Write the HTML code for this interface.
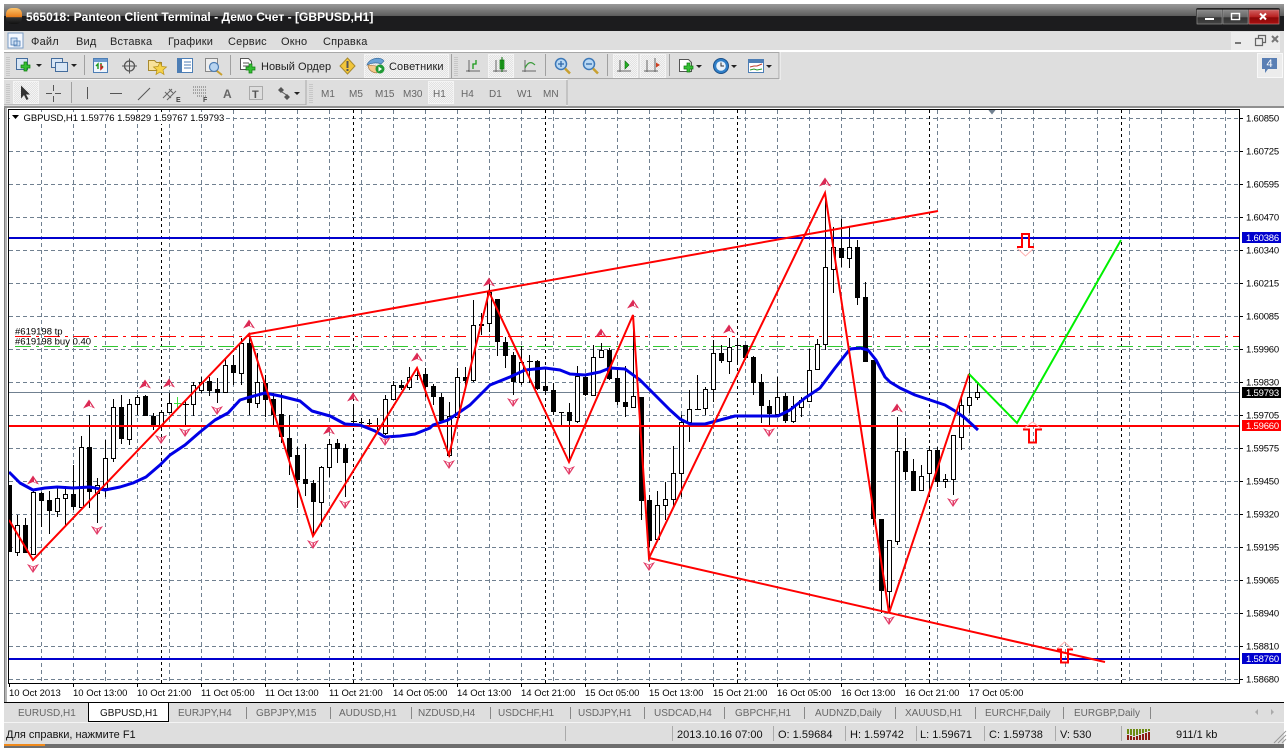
<!DOCTYPE html>
<html><head><meta charset="utf-8"><title>Panteon Client Terminal</title>
<style>
html,body{margin:0;padding:0;background:#fff;width:1288px;height:748px;overflow:hidden}
svg{display:block;position:absolute;left:0;top:0}
text{font-family:"Liberation Sans","Noto Sans CJK JP",sans-serif;font-size:11px;fill:#222}
.t{font-size:12px;font-weight:bold;fill:#fff;letter-spacing:.03px}
.m{font-size:11px;fill:#222;letter-spacing:.2px}
.g{font-size:10px;fill:#666}
.c{font-size:9.5px;fill:#000}
.p{font-size:9.5px;fill:#000;letter-spacing:-.2px}
.pw{font-size:9.5px;fill:#fff;letter-spacing:-.2px}
.tab{font-size:10px;fill:#666}
.s{font-size:11px;fill:#111}
</style></head><body>
<svg width="1288" height="748" viewBox="0 0 1288 748" xmlns="http://www.w3.org/2000/svg">
<defs>
<linearGradient id="tg" x1="0" y1="0" x2="0" y2="1"><stop offset="0" stop-color="#9a9a9a"/><stop offset="1" stop-color="#5c5c5c"/></linearGradient>
<linearGradient id="orb" x1="0" y1="0" x2="0" y2="1"><stop offset="0" stop-color="#fbc36a"/><stop offset=".55" stop-color="#e87e1c"/><stop offset=".6" stop-color="#333"/><stop offset="1" stop-color="#111"/></linearGradient>
<linearGradient id="wb" x1="0" y1="0" x2="0" y2="1"><stop offset="0" stop-color="#8a8a8a"/><stop offset=".5" stop-color="#666"/><stop offset=".55" stop-color="#333"/><stop offset="1" stop-color="#444"/></linearGradient>
<linearGradient id="wr" x1="0" y1="0" x2="0" y2="1"><stop offset="0" stop-color="#d06060"/><stop offset=".5" stop-color="#b82020"/><stop offset=".55" stop-color="#8c0808"/><stop offset="1" stop-color="#a81010"/></linearGradient>
<pattern id="pr" width="2" height="2" patternUnits="userSpaceOnUse"><rect width="2" height="2" fill="#e2e2e2"/><rect width="1" height="1" fill="#f4f4f4"/><rect x="1" y="1" width="1" height="1" fill="#f4f4f4"/></pattern>
<g id="ua" transform="translate(0,.5)"><path d="M0 9L6 0L12 9L6 6.500Z" fill="#dc2a55"/><path d="M7 3.500L9.500 7.600L7 6.300Z" fill="#fff"/></g>
<g id="da" transform="translate(0,1)"><path d="M0 0L6 2.500L12 0L6 9Z" fill="#e23a66"/><path d="M2.800 1.600L5.500 6.500L5.500 3.300Z" fill="#fff"/><path d="M9.200 1.600L7 5.500L7 3.300Z" fill="#fff"/></g>
</defs>

<!-- title bar -->
<rect x="4" y="4" width="1280" height="12" fill="url(#tg)"/>
<rect x="4" y="16" width="1280" height="15" fill="#1c1c1e"/>
<rect x="6" y="8" width="16" height="16" rx="6" fill="url(#orb)"/>
<text class="t" x="26" y="21">565018: Panteon Client Terminal - Демо Счет - [GBPUSD,H1]</text>
<rect x="1196" y="8" width="84" height="17" rx="2" fill="#222"/>
<rect x="1197" y="10" width="25" height="14" fill="url(#wb)" stroke="#999" stroke-width=".6"/>
<rect x="1223" y="10" width="25" height="14" fill="url(#wb)" stroke="#999" stroke-width=".6"/>
<rect x="1249" y="10" width="30" height="14" fill="url(#wr)" stroke="#c88" stroke-width=".6"/>
<rect x="1205" y="18" width="9" height="2" fill="#fff"/>
<rect x="1231.5" y="13.5" width="8" height="6" fill="none" stroke="#fff" stroke-width="1.4"/>
<path d="M1260 13.5l6 6M1266 13.5l-6 6" stroke="#fff" stroke-width="2"/>

<!-- menu -->
<rect x="4" y="31" width="1280" height="19" fill="#dedede"/>
<rect x="8" y="33" width="15" height="15" fill="#f4f8ff" stroke="#7a9cc4"/>
<path d="M11 38h6v7h-6zM14 41h6v5h-6z" fill="#cfe0f4" stroke="#4a78b0" stroke-width=".8"/>
<text class="m" x="31" y="45">Файл</text><text class="m" x="76" y="45">Вид</text><text class="m" x="110" y="45">Вставка</text><text class="m" x="168" y="45">Графики</text><text class="m" x="228" y="45">Сервис</text><text class="m" x="281" y="45">Окно</text><text class="m" x="323" y="45">Справка</text>
<rect x="1231" y="32" width="49" height="18" fill="#ececec"/>
<rect x="1235" y="42" width="6" height="2" fill="#777"/>
<path d="M1255.5 38.5h7v7h-7zM1258.5 38.5v-3h7v7h-3" fill="none" stroke="#666" stroke-width="1.2"/>
<path d="M1272 36l6 6M1278 36l-6 6" stroke="#777" stroke-width="2"/>

<!-- toolbars -->
<rect x="4" y="50" width="1280" height="56" fill="#dedede"/>
<rect x="4" y="50" width="1276" height="2" fill="#fff"/>
<path d="M4 52.5H779V79" fill="none" stroke="#a8a8a8"/>
<path d="M4 78.5H779" stroke="#a8a8a8"/>
<path d="M780 52V80" stroke="#f8f8f8"/>
<path d="M4 79.5H567V106" fill="none" stroke="#f8f8f8"/>
<path d="M4 104.5H306" stroke="#bbb"/>
<path d="M306 80V105M567 80V105" stroke="#a8a8a8"/>
<rect x="4" y="106" width="1280" height="2" fill="#8f8f8f"/>
<path d="M7 57V76M9 57V76M7 84V103M9 84V103M310 84V103M312 84V103M455 57V76M457 57V76" stroke="#b0b0b0" stroke-dasharray="1 1"/>

<!-- toolbar 1 icons -->
<rect x="16.500" y="58.500" width="11" height="11" fill="#d8e6f5" stroke="#446c9c"/>
<path d="M24 62h3v3h3v3h-3v3h-3v-3h-3v-3h3z" fill="#35c035" stroke="#0c7c0c" stroke-width=".7"/>
<path d="M36 64h6l-3 3z" fill="#222"/>
<rect x="51.500" y="58.500" width="11" height="9" fill="#d8e6f5" stroke="#446c9c"/><rect x="55.500" y="62.500" width="12" height="9" fill="#d8e6f5" stroke="#446c9c"/>
<path d="M71 64h6l-3 3z" fill="#222"/><path d="M84.500 55V75" stroke="#a0a0a0"/>
<rect x="93.500" y="58.500" width="14" height="14" fill="#eef5fc" stroke="#4d7eb5"/><rect x="94" y="59" width="13" height="3" fill="#6b9ad0"/><path d="M98 69v-5l-2 2M101 63v5l2-2" fill="none" stroke="#1a9a1a" stroke-width="1.4"/><path d="M101 64v5l2-2" fill="none" stroke="#d02020" stroke-width="1.4"/>
<circle cx="129.500" cy="66" r="5" fill="none" stroke="#555" stroke-width="1.3"/><path d="M129.500 58.500v15M122 66h15" stroke="#555"/>
<path d="M148.500 60.500h6l2 2h5v8h-13z" fill="#f8e29a" stroke="#a88a2e"/><path d="M160 62l2 4.500 4.500.5-3.500 3 1 4.500-4-2.500-4 2.500 1-4.500-3.500-3 4.500-.5z" fill="#f6d34a" stroke="#b58f16" stroke-width=".7"/>
<rect x="177.500" y="58.500" width="15" height="14" fill="#fff" stroke="#4d7eb5"/><rect x="178" y="59" width="4" height="13" fill="#4d7eb5"/><path d="M184 62h7M184 65h7M184 68h7" stroke="#4d7eb5"/>
<rect x="205.500" y="58.500" width="12" height="13" fill="#eee" stroke="#888"/><circle cx="214" cy="67" r="4.500" fill="#b8d4f0" stroke="#4d7eb5" stroke-width="1.2"/><path d="M217 71l5 4" stroke="#c8a030" stroke-width="2"/>
<path d="M230.500 55V75" stroke="#a0a0a0"/>
<path d="M240.500 58.500h8l3 3v8h-11z" fill="#fff" stroke="#555"/><path d="M243 63h6M243 66h6" stroke="#555"/>
<path d="M249 64h3v3h3v3h-3v3h-3v-3h-3v-3h3z" fill="#35c035" stroke="#0c7c0c" stroke-width=".7"/>
<text class="m" x="261" y="70" style="letter-spacing:0">Новый Ордер</text>
<path d="M347.500 58L355 66L347.500 74L340 66Z" fill="#f2c63a" stroke="#a88a2e"/><rect x="346.500" y="61" width="2" height="7" fill="#555"/><rect x="346.500" y="69" width="2" height="2" fill="#555"/>
<rect x="364.500" y="54.500" width="84" height="23" fill="url(#pr)" stroke="#f4f4f4"/>
<path d="M367 65c2-7 14-9 17-4l-3 3c-4-2-10-1-14 1z" fill="#6aa2d6" stroke="#3d6fa0" stroke-width=".7"/>
<path d="M368 65c0 5 5 8 9 8l-1-7z" fill="#f6c88a" stroke="#a07038" stroke-width=".6"/><circle cx="380" cy="69" r="4.500" fill="#1f9a35"/><path d="M378.500 66.500v5l3.500-2.500z" fill="#fff"/>
<text class="m" x="389" y="70" style="letter-spacing:.1px">Советники</text>
<path d="M451.500 54V78" stroke="#a0a0a0"/>
<path d="M469 60v12M466 71h14M468 71l1-1" stroke="#666" fill="none"/><path d="M473 69v-5h3v-4" stroke="#1a9a1a" fill="none" stroke-width="1.3"/>
<rect x="488.500" y="54.500" width="25" height="23" fill="url(#pr)" stroke="#f4f4f4"/>
<path d="M496 60v12M493 71h14" stroke="#666" fill="none"/><rect x="500" y="60" width="4" height="9" fill="#22b022" stroke="#0c6c0c" stroke-width=".7"/><path d="M502 57v15" stroke="#0c6c0c"/>
<path d="M525 60v12M522 71h14" stroke="#666" fill="none"/><path d="M525 68c3-6 6-7 10-3" stroke="#3b9b3b" fill="none" stroke-width="1.2"/>
<path d="M545.500 54V76" stroke="#a0a0a0"/>
<circle cx="561" cy="64" r="5.500" fill="#b8d8f4" stroke="#3d78b8" stroke-width="1.5"/><path d="M558 64h6M561 61v6" stroke="#2f68a8" stroke-width="1.3"/><path d="M565 68.500l5 5" stroke="#c8a030" stroke-width="2.500"/>
<circle cx="589" cy="64" r="5.500" fill="#b8d8f4" stroke="#3d78b8" stroke-width="1.5"/><path d="M586 64h6" stroke="#2f68a8" stroke-width="1.3"/><path d="M593 68.500l5 5" stroke="#c8a030" stroke-width="2.500"/>
<path d="M607.500 54V76" stroke="#a0a0a0"/>
<rect x="613.500" y="54.500" width="24" height="23" fill="url(#pr)" stroke="#f4f4f4"/><path d="M620 60v12M617 71h14" stroke="#666" fill="none"/><path d="M625 61v8l4-4z" fill="#22b022" stroke="#0c6c0c" stroke-width=".6"/>
<rect x="640.500" y="54.500" width="25" height="23" fill="url(#pr)" stroke="#f4f4f4"/><path d="M647 60v12M644 71h14M655 58v14" stroke="#666" fill="none"/><path d="M660 65l-4-2.500v5z" fill="#d04020"/>
<path d="M669.500 54V76" stroke="#a0a0a0"/>
<path d="M679.500 59.500h9l3 3v9h-12z" fill="#fff" stroke="#555"/><path d="M687 63h3v3h3v3h-3v3h-3v-3h-3v-3h3z" fill="#35c035" stroke="#0c7c0c" stroke-width=".7"/><path d="M696 65h6l-3 3z" fill="#222"/>
<circle cx="721" cy="66" r="7.500" fill="#2f7fc8" stroke="#1b4f88"/><circle cx="721" cy="66" r="4.800" fill="#e8f2fb"/><path d="M721 62.500V66h3" stroke="#333" fill="none"/><path d="M731 65h6l-3 3z" fill="#222"/>
<rect x="748.500" y="59.500" width="15" height="13" fill="#fff" stroke="#4d7eb5"/><rect x="749" y="60" width="14" height="3" fill="#4d7eb5"/><path d="M750 67l4-1 3 0 5-2" stroke="#c04030" fill="none"/><path d="M750 70l4-1 3 1 5-1" stroke="#2a9a2a" fill="none"/><path d="M766 65h6l-3 3z" fill="#222"/>
<rect x="1257.500" y="53.500" width="25" height="24" fill="#ececec" stroke="#f8f8f8"/>
<path d="M1262 58h15v11h-9l-3 4v-4h-3z" fill="#5a7fb4"/><text x="1266.500" y="67" style="font-size:11px;fill:#fff">4</text>

<!-- toolbar 2 icons -->
<rect x="13.500" y="81.500" width="25" height="22" fill="url(#pr)" stroke="#f4f4f4"/>
<path d="M21 85.500v13l3-3.500 2.500 5 2-1-2.500-4.500 4 0z" fill="#333"/>
<path d="M53.500 85v6M53.500 96v6M46 93.500h6M55 93.500h6" stroke="#555"/>
<path d="M71.500 82V103" stroke="#a0a0a0"/>
<path d="M87.500 87V99" stroke="#555" stroke-width="1"/><path d="M110 93.500h12" stroke="#555"/><path d="M138 100l12-12" stroke="#555"/>
<path d="M163 98l9-9M167 100l9-9M165 92l6 6M169 89l4 4" stroke="#666" fill="none"/><text x="176" y="102" style="font-size:7px;fill:#444;font-weight:bold">E</text>
<path d="M193 87h14M193 90h14M193 93h14M197 96h10" stroke="#666" stroke-dasharray="1 1"/><text x="203" y="102" style="font-size:7px;fill:#444;font-weight:bold">F</text>
<text x="223" y="98" style="font-size:12px;font-weight:bold;fill:#666">A</text>
<rect x="249.500" y="86.500" width="13" height="13" fill="none" stroke="#777" stroke-dasharray="1 1"/><text x="252" y="98" style="font-size:11px;font-weight:bold;fill:#555">T</text>
<path d="M281 87l3 3-3 3-3-3zM287 94l3 3-3 3-3-3z" fill="#555"/><path d="M282 92l6 4" stroke="#555"/><path d="M294 92h6l-3 3z" fill="#222"/>
<text class="g" x="321" y="97">M1</text><text class="g" x="349" y="97">M5</text><text class="g" x="375" y="97">M15</text><text class="g" x="403" y="97">M30</text>
<rect x="428.500" y="81.500" width="25" height="22" fill="url(#pr)" stroke="#f4f4f4"/>
<text class="g" x="433" y="97">H1</text><text class="g" x="461" y="97">H4</text><text class="g" x="489" y="97">D1</text><text class="g" x="517" y="97">W1</text><text class="g" x="543" y="97">MN</text>

<!-- left border -->
<rect x="4" y="108" width="1" height="594" fill="#7d7d7d"/><rect x="5" y="108" width="2" height="594" fill="#b4b4b4"/>

<!-- chart -->
<g fill="none" stroke="#708090" stroke-dasharray="4 3">
<path d="M9 118.500H1239M9 151.500H1239M9 184.500H1239M9 217.500H1239M9 250.500H1239M9 283.500H1239M9 316.500H1239M9 349.500H1239M9 382.500H1239M9 415.500H1239M9 448.500H1239M9 481.500H1239M9 514.500H1239M9 547.500H1239M9 580.500H1239M9 613.500H1239M9 646.500H1239M9 679.500H1239"/>
<path d="M41.500 110V683M73.500 110V683M105.500 110V683M137.500 110V683M169.500 110V683M201.500 110V683M233.500 110V683M265.500 110V683M297.500 110V683M329.500 110V683M361.500 110V683M393.500 110V683M425.500 110V683M457.500 110V683M489.500 110V683M521.500 110V683M553.500 110V683M585.500 110V683M617.500 110V683M649.500 110V683M681.500 110V683M713.500 110V683M745.500 110V683M777.500 110V683M809.500 110V683M841.500 110V683M873.500 110V683M905.500 110V683M937.500 110V683M969.500 110V683M1001.500 110V683M1033.500 110V683M1065.500 110V683M1097.500 110V683M1129.500 110V683M1161.500 110V683M1193.500 110V683M1225.500 110V683"/>
</g>
<path d="M161.500 110V683M353.500 110V683M545.500 110V683M737.500 110V683M929.500 110V683M1121.500 110V683" stroke="#000" stroke-dasharray="3 3" fill="none"/>
<rect x="10" y="112" width="215" height="12" fill="#fff"/>
<!-- price lines -->
<path d="M9 392.500H1239" stroke="#708090"/>
<path d="M15 336.500H1239" stroke="#f00" stroke-dasharray="16 5 3 5" fill="none"/>
<path d="M15 346.500H1239" stroke="#2ec82e" stroke-dasharray="16 5 3 5" fill="none"/>

<!-- wicks -->
<path stroke="#000" fill="none" d="M17.500 515V556M25.500 518V553M33.500 490V555M41.500 492V527M49.500 491V534M57.500 488V517M65.500 486V527M73.500 465V510M81.500 436V508M89.500 415V508M97.500 478V523M105.500 440V497M113.500 399V462M121.500 395V444M129.500 399V445M137.500 395V415M145.500 395V416M153.500 413V430M161.500 410V430M169.500 393V413M185.500 400V425M193.500 382V416M201.500 377V393M209.500 377V396M217.500 378V403M225.500 358V392M233.500 355V385M241.500 338V385M249.500 333V415M257.500 353V408M265.500 375V417M273.500 393V427M281.500 393V443M289.500 415V475M297.500 447V508M305.500 444V496M313.500 480V535M321.500 466V527M329.500 439V477M337.500 439V463M345.500 444V497M353.500 407V425M361.500 418V425M369.500 419V426M377.500 418V430M385.500 395V435M393.500 381V400M401.500 380V390M409.500 367V390M417.500 368V380M425.500 368V397M433.500 384V405M441.500 393V423M449.500 402V457M457.500 368V417M465.500 367V387M473.500 300V382M481.500 313V335M489.500 280V332M497.500 299V356M505.500 337V368M513.500 352V395M521.500 346V385M529.500 355V383M537.500 360V390M545.500 370V395M553.500 383V415M561.500 412V425M569.500 403V462M577.500 366V423M585.500 375V396M593.500 345V396M601.500 343V358M609.500 348V380M617.500 367V405M625.500 366V417M633.500 330V408M641.500 397V520M649.500 495V547M657.500 491V540M665.500 482V520M673.500 446V507M681.500 415V497M689.500 390V442M697.500 375V410M705.500 387V415M713.500 340V402M721.500 345V363M729.500 338V374M737.500 338V365M745.500 345V360M753.500 356V395M761.500 374V423M769.500 400V425M777.500 377V414M785.500 393V423M793.500 396V423M801.500 397V417M809.500 349V402M817.500 339V370M825.500 193V350M833.500 227V293M841.500 219V267M849.500 227V268M857.500 240V305M865.500 282V362M873.500 360V525M881.500 519V613M889.500 540V613M897.500 417V545M905.500 438V480M913.500 459V491M921.500 465V491M929.500 447V490M937.500 447V487M945.500 474V488M953.500 435V495M961.500 397V450M969.500 373V413M977.500 383V400"/>
<!-- dojis -->
<path stroke="#000" fill="none" d="M183 404.500h6M351 421.500h6M359 422.500h5M367 423.500h5M375 426.500h5M415 375.500h6M527 361.500h6M559 412.500h5M695 409.500h6M735 345.500h6"/>
<path stroke="#3cdc3c" fill="none" d="M177.500 397V408M174 403.500h7"/>
<!-- white bodies -->
<path fill="#fff" stroke="#000" d="M15.500 525.500h4v27h-4zM31.500 492.500h4v62h-4zM55.500 498.500h4v13h-4zM63.500 494.500h4v4h-4zM79.500 447.500h4v60h-4zM95.500 485.500h4v8h-4zM103.500 458.500h4v30h-4zM111.500 407.500h4v51h-4zM127.500 404.500h4v35h-4zM135.500 397.500h4v7h-4zM159.500 412.500h4v14h-4zM167.500 403.500h4v9h-4zM191.500 385.500h4v19h-4zM199.500 382.500h4v8h-4zM223.500 365.500h4v27h-4zM239.500 343.500h4v30h-4zM255.500 382.500h4v21h-4zM319.500 467.500h4v35h-4zM327.500 444.500h4v23h-4zM383.500 399.500h4v34h-4zM391.500 385.500h4v14h-4zM407.500 377.500h4v10h-4zM447.500 416.500h4v39h-4zM455.500 377.500h4v40h-4zM471.500 325.500h4v55h-4zM487.500 292.500h4v31h-4zM519.500 362.500h4v20h-4zM575.500 376.500h4v45h-4zM591.500 357.500h4v38h-4zM599.500 350.500h4v7h-4zM631.500 396.500h4v11h-4zM655.500 505.500h4v34h-4zM663.500 499.500h4v6h-4zM671.500 473.500h4v26h-4zM679.500 422.500h4v51h-4zM687.500 409.500h4v13h-4zM703.500 389.500h4v19h-4zM711.500 353.500h4v36h-4zM727.500 347.500h4v14h-4zM775.500 397.500h4v17h-4zM791.500 406.500h4v15h-4zM799.500 400.500h4v7h-4zM807.500 370.500h4v31h-4zM815.500 344.500h4v25h-4zM823.500 267.500h4v77h-4zM831.500 247.500h4v22h-4zM847.500 247.500h4v11h-4zM887.500 540.500h4v51h-4zM895.500 451.500h4v90h-4zM919.500 476.500h4v14h-4zM927.500 450.500h4v23h-4zM943.500 479.500h4v2h-4zM951.500 435.500h4v44h-4zM959.500 405.500h4v32h-4zM967.500 397.500h4v8h-4zM975.500 392.500h4v5h-4z"/>
<!-- black bodies -->
<path fill="#000" d="M9 485h3v67h-3zM23 525h5v28h-5zM39 493h5v8h-5zM47 500h5v11h-5zM71 494h5v13h-5zM87 447h5v45h-5zM119 407h5v32h-5zM143 396h5v20h-5zM151 416h5v10h-5zM207 381h5v10h-5zM215 389h5v4h-5zM231 365h5v8h-5zM247 343h5v60h-5zM263 383h5v17h-5zM271 399h5v16h-5zM279 414h5v23h-5zM287 438h5v19h-5zM295 455h5v25h-5zM303 479h5v5h-5zM311 483h5v19h-5zM335 443h5v6h-5zM343 448h5v15h-5zM399 385h5v3h-5zM423 374h5v13h-5zM431 386h5v11h-5zM439 397h5v24h-5zM463 377h5v4h-5zM479 324h5v2h-5zM495 299h5v43h-5zM503 342h5v14h-5zM511 355h5v27h-5zM535 361h5v28h-5zM543 386h5v5h-5zM551 390h5v22h-5zM567 412h5v9h-5zM583 377h5v18h-5zM607 350h5v29h-5zM615 378h5v24h-5zM623 402h5v5h-5zM639 397h5v104h-5zM647 500h5v41h-5zM719 353h5v8h-5zM743 345h5v13h-5zM751 357h5v26h-5zM759 382h5v24h-5zM767 406h5v8h-5zM783 396h5v25h-5zM839 248h5v10h-5zM855 247h5v51h-5zM863 297h5v65h-5zM871 360h5v159h-5zM879 519h5v72h-5zM903 451h5v21h-5zM911 471h5v20h-5zM935 450h5v32h-5z"/>
<!-- horizontal levels -->
<path d="M9 238H1239M9 659H1239" stroke="#0000cd" stroke-width="2"/>
<path d="M9 426H1239" stroke="#f00" stroke-width="2"/>
<!-- blue MA -->
<polyline fill="none" stroke="#0000e6" stroke-width="3" stroke-linejoin="round" points="9,472 20,483 33,490 45,488 57,487 73,488 90,487 105,490 120,487 133,483 146,477 160,465 170,455 185,445 200,432 215,420 228,413 240,400 250,397 265,393 280,396 300,401 312,411 330,416 345,424 360,425 375,431 385,437 400,436 415,434 430,428 433,425 448,420 470,405 490,385 510,377 525,370 545,368 560,370 570,374 585,375 600,372 610,368 625,369 640,380 655,395 670,410 680,419 690,424 705,424 720,420 735,416 745,416 765,416 778,416 790,410 805,398 820,388 835,368 850,349 860,348 868,350 876,360 885,377 890,382 900,388 915,395 930,400 945,405 955,411 965,418 978,430"/>
<!-- zigzag & trendlines -->
<polyline fill="none" stroke="#f00" stroke-width="2" points="9,520 33,560 249,334 313,536 417,368 449,455 489,292 569,462 633,315 649,558 825,193 889,613 969,374"/>
<path d="M249 334L938 211M649 558L1105 662" fill="none" stroke="#f00" stroke-width="2"/>
<polyline fill="none" stroke="#00f000" stroke-width="2" points="969,374 1017,423 1121,240"/>

<!-- fractals -->
<use href="#ua" x="27" y="475"/><use href="#ua" x="83" y="399"/><use href="#ua" x="139" y="379"/><use href="#ua" x="163" y="378"/><use href="#ua" x="243" y="319"/><use href="#ua" x="323" y="425"/><use href="#ua" x="347" y="392"/><use href="#ua" x="411" y="352"/><use href="#ua" x="483" y="277"/><use href="#ua" x="627" y="299"/><use href="#ua" x="595" y="328"/><use href="#ua" x="723" y="324"/><use href="#ua" x="819" y="177"/><use href="#ua" x="891" y="403"/>
<use href="#da" x="27" y="563"/><use href="#da" x="91" y="525"/><use href="#da" x="155" y="434"/><use href="#da" x="179" y="427"/><use href="#da" x="211" y="405"/><use href="#da" x="307" y="539"/><use href="#da" x="339" y="499"/><use href="#da" x="379" y="436"/><use href="#da" x="443" y="459"/><use href="#da" x="507" y="397"/><use href="#da" x="563" y="465"/><use href="#da" x="643" y="561"/><use href="#da" x="763" y="427"/><use href="#da" x="883" y="615"/><use href="#da" x="947" y="497"/>
<!-- arrows -->
<path d="M1017 248l8.500 8 8.500-8" fill="none" stroke="#ffb0b0"/><path d="M1017 247h5v-13h7v13h5" fill="none" stroke="#f00" stroke-width="2"/>
<path d="M1023 429l9.500-7 9.500 7" fill="none" stroke="#ffb0b0"/><path d="M1023 429.500h6v13h7v-13h6" fill="none" stroke="#f00" stroke-width="2"/>
<path d="M1057 649l7.500-7 7.500 7" fill="none" stroke="#ffb0b0"/><path d="M1057 649.500h4v13h7v-13h5" fill="none" stroke="#f00" stroke-width="2"/>
<!-- marker -->
<path d="M988 109.500h8l-4 5z" fill="#708090"/>

<!-- frame -->
<rect x="8.500" y="109.500" width="1231" height="574" fill="none" stroke="#000"/>
<!-- chart text -->
<path d="M12 115h7l-3.500 4z" fill="#000"/>
<text class="c" x="23.500" y="121" style="letter-spacing:-.05px">GBPUSD,H1  1.59776 1.59829 1.59767 1.59793</text>
<text class="c" x="15" y="334.500">#619198 tp</text>
<text class="c" x="15" y="344.500">#619198 buy 0.40</text>
<!-- price axis -->
<path stroke="#000" d="M1240 118.500h3M1240 151.500h3M1240 184.500h3M1240 217.500h3M1240 250.500h3M1240 283.500h3M1240 316.500h3M1240 349.500h3M1240 382.500h3M1240 415.500h3M1240 448.500h3M1240 481.500h3M1240 514.500h3M1240 547.500h3M1240 580.500h3M1240 613.500h3M1240 646.500h3M1240 679.500h3"/>
<text class="p" x="1246" y="121.500">1.60850</text><text class="p" x="1246" y="154.500">1.60725</text><text class="p" x="1246" y="187.500">1.60595</text><text class="p" x="1246" y="220.500">1.60470</text><text class="p" x="1246" y="253.500">1.60340</text><text class="p" x="1246" y="286.500">1.60215</text><text class="p" x="1246" y="319.500">1.60085</text><text class="p" x="1246" y="352.500">1.59960</text><text class="p" x="1246" y="385.500">1.59830</text><text class="p" x="1246" y="418.500">1.59705</text><text class="p" x="1246" y="451.500">1.59575</text><text class="p" x="1246" y="484.500">1.59450</text><text class="p" x="1246" y="517.500">1.59320</text><text class="p" x="1246" y="550.500">1.59195</text><text class="p" x="1246" y="583.500">1.59065</text><text class="p" x="1246" y="616.500">1.58940</text><text class="p" x="1246" y="649.500">1.58810</text><text class="p" x="1246" y="682.500">1.58680</text>
<rect x="1242" y="232" width="39" height="11" fill="#0000cd"/><text class="pw" x="1246" y="241">1.60386</text>
<rect x="1242" y="420" width="39" height="11" fill="#f00"/><text class="pw" x="1246" y="429">1.59660</text>
<rect x="1242" y="653" width="39" height="11" fill="#0000cd"/><text class="pw" x="1246" y="662">1.58760</text>
<rect x="1242" y="387" width="39" height="11" fill="#000"/><text class="pw" x="1246" y="396">1.59793</text>
<!-- time axis -->
<path stroke="#000" d="M9.500 684v3M73.500 684v3M137.500 684v3M201.500 684v3M265.500 684v3M329.500 684v3M393.500 684v3M457.500 684v3M521.500 684v3M585.500 684v3M649.500 684v3M713.500 684v3M777.500 684v3M841.500 684v3M905.500 684v3M969.500 684v3"/>
<text class="c" x="9" y="696">10 Oct 2013</text><text class="c" x="73" y="696">10 Oct 13:00</text><text class="c" x="137" y="696">10 Oct 21:00</text><text class="c" x="201" y="696">11 Oct 05:00</text><text class="c" x="265" y="696">11 Oct 13:00</text><text class="c" x="329" y="696">11 Oct 21:00</text><text class="c" x="393" y="696">14 Oct 05:00</text><text class="c" x="457" y="696">14 Oct 13:00</text><text class="c" x="521" y="696">14 Oct 21:00</text><text class="c" x="585" y="696">15 Oct 05:00</text><text class="c" x="649" y="696">15 Oct 13:00</text><text class="c" x="713" y="696">15 Oct 21:00</text><text class="c" x="777" y="696">16 Oct 05:00</text><text class="c" x="841" y="696">16 Oct 13:00</text><text class="c" x="905" y="696">16 Oct 21:00</text><text class="c" x="969" y="696">17 Oct 05:00</text>

<!-- tabs -->
<rect x="4" y="703" width="1280" height="19" fill="#dedede"/>
<path d="M4 702.500H1284" stroke="#000"/>
<rect x="88.500" y="702.500" width="80" height="19" fill="#fff" stroke="#000"/>
<path d="M88.500 703V722" stroke="#000"/>
<text class="tab" x="18" y="716">EURUSD,H1</text><text x="100" y="716" style="font-size:10px;fill:#111">GBPUSD,H1</text><text class="tab" x="178" y="716">EURJPY,H4</text><text class="tab" x="256" y="716">GBPJPY,M15</text><text class="tab" x="339" y="716">AUDUSD,H1</text><text class="tab" x="418" y="716">NZDUSD,H4</text><text class="tab" x="498" y="716">USDCHF,H1</text><text class="tab" x="578" y="716">USDJPY,H1</text><text class="tab" x="654" y="716">USDCAD,H4</text><text class="tab" x="735" y="716">GBPCHF,H1</text><text class="tab" x="815" y="716">AUDNZD,Daily</text><text class="tab" x="905" y="716">XAUUSD,H1</text><text class="tab" x="985" y="716">EURCHF,Daily</text><text class="tab" x="1074" y="716">EURGBP,Daily</text>
<path stroke="#888" d="M246.500 707V719M330.500 707V719M411.500 707V719M490.500 707V719M570.500 707V719M644.500 707V719M724.500 707V719M804.500 707V719M895.500 707V719M975.500 707V719M1063.500 707V719M1150.500 707V719"/>
<path d="M1258 709v6l-3-3zM1271 709v6l3-3z" fill="#aaa"/>

<!-- status bar -->
<rect x="4" y="722" width="1280" height="22" fill="#dedede"/>
<path d="M4 722.500H1284" stroke="#f4f4f4"/>
<text class="s" x="6" y="738">Для справки, нажмите F1</text>
<path stroke="#aaa" d="M565.500 726V741M672.500 726V741M773.500 726V741M845.500 726V741M916.500 726V741M984.500 726V741M1055.500 726V741M1121.500 726V741"/>
<text class="s" x="677" y="738">2013.10.16 07:00</text><text class="s" x="778" y="738">O: 1.59684</text><text class="s" x="850" y="738">H: 1.59742</text><text class="s" x="920" y="738">L: 1.59671</text><text class="s" x="989" y="738">C: 1.59738</text><text class="s" x="1060" y="738">V: 530</text>
<path d="M1127 729h2v5h-2zM1130 729h2v6h-2zM1133 729h2v7h-2zM1136 729h2v6h-2zM1139 729h2v5h-2zM1142 729h2v4h-2zM1145 729h2v3h-2zM1148 729h2v2h-2z" fill="#6b8a10"/>
<path d="M1127 735h2v5h-2zM1130 736h2v4h-2zM1133 737h2v3h-2zM1136 736h2v4h-2zM1139 735h2v5h-2zM1142 734h2v6h-2zM1145 733h2v7h-2zM1148 732h2v8h-2z" fill="#8c1a10"/>
<text class="s" x="1176" y="738">911/1 kb</text>
<path d="M1274 743l12-12M1278 743l8-8M1282 743l4-4" stroke="#999"/>

<!-- bottom edge -->
<rect x="4" y="744" width="1280" height="4" fill="#6e6e6e"/>
<rect x="4" y="744" width="41" height="2" fill="#f08a1c"/>
</svg>
</body></html>
